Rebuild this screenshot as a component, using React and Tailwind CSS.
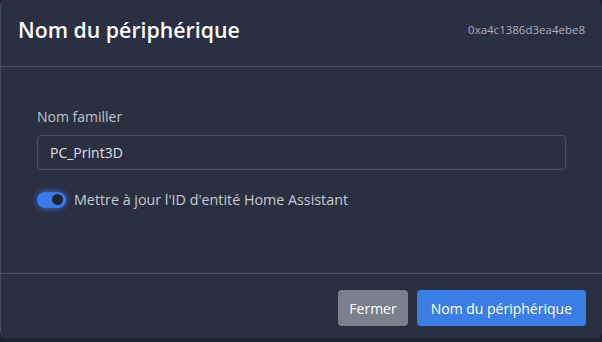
import React, { useState } from "react";

export default function App() {
  const [name, setName] = useState("PC_Print3D");
  const [updateId, setUpdateId] = useState(true);

  return (
    <div className="w-[602px] h-[342px] bg-[#1d2130] overflow-hidden font-['Open_Sans',_'Liberation_Sans',_sans-serif]">
      <div className="w-[602px] h-[338px] bg-[#2a2f41] border-l border-[#454b5c] rounded-md flex flex-col">
        {/* header */}
        <div className="h-[67px] flex items-center justify-between pl-[17px] pr-[17px] pb-[7px] border-b border-[#4a5064]">
          <h2 className="text-[21.3px] font-semibold text-white">
            Nom du périphérique
          </h2>
          <span className="text-[11.5px] text-[#aab0be]">0xa4c1386d3ea4ebe8</span>
        </div>

        {/* body */}
        <div className="flex-1 px-9 pt-[39px]">
          <label className="block text-[14px] text-[#bfc4ce] mb-[8px]">Nom familler</label>
          <input
            value={name}
            onChange={(e) => setName(e.target.value)}
            className="w-[529px] h-[35px] px-3 bg-transparent border border-[#4a5064] rounded text-[14px] text-[#dfe2e8] outline-none"
          />
          <label className="mt-[19px] flex items-center gap-2 cursor-pointer">
            <button
              onClick={() => setUpdateId(!updateId)}
              className={`w-[29px] h-[16px] rounded-full flex items-center px-[3px] shadow-[0_0_6px_#3b6fe0] ${
                updateId ? "bg-[#3d7ae8] justify-end" : "bg-[#4a5064] justify-start"
              }`}
            >
              <span className="w-[11px] h-[11px] rounded-full bg-[#1f2433]" />
            </button>
            <span className="text-[14.3px] text-[#c6cad3]">
              Mettre à jour l'ID d'entité Home Assistant
            </span>
          </label>
        </div>

        {/* footer */}
        <div className="h-[65px] border-t border-[#4a5064] flex items-start justify-end gap-[9px] pt-[16px] pr-[16px]">
          <button className="h-[36px] px-[11px] rounded bg-[#7b808d] text-white text-[14px]">
            Fermer
          </button>
          <button className="h-[36px] px-[14px] rounded bg-[#3b7ee6] text-white text-[14px]">
            Nom du périphérique
          </button>
        </div>
      </div>
    </div>
  );
}
